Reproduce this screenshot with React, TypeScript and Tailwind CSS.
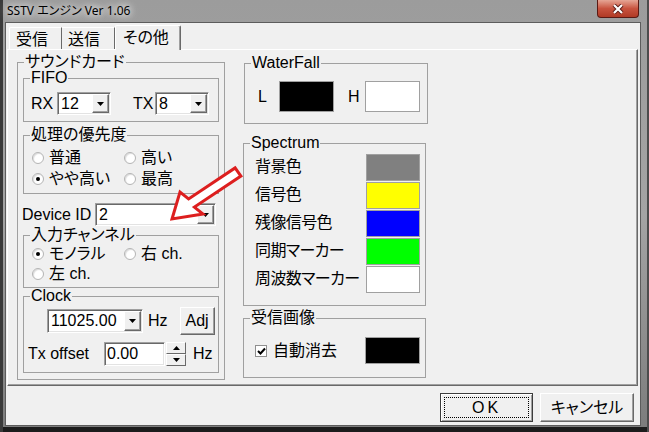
import type { ReactNode } from "react";

function Group({
  label,
  className,
  children,
}: {
  label: string;
  className: string;
  children?: ReactNode;
}) {
  return (
    <fieldset className={`border border-[#a0a0a0] ${className}`}>
      <legend className="ml-[6px] px-[1px] leading-[16px]">{label}</legend>
      {children}
    </fieldset>
  );
}

function Arrow({ up }: { up?: boolean }) {
  return (
    <svg width="7" height="4" viewBox="0 0 7 4">
      {up ? <path d="M0 4 L3.5 0 L7 4 Z" fill="#000" /> : <path d="M0 0 L7 0 L3.5 4 Z" fill="#000" />}
    </svg>
  );
}

function DropBtn() {
  return (
    <div className="w-[17px] h-full flex items-center justify-center bg-[#f0f0f0] border border-t-white border-l-white border-r-[#696969] border-b-[#696969] shadow-[inset_-1px_-1px_0_#a0a0a0]">
      <Arrow />
    </div>
  );
}

function Combo({ value, className }: { value: string; className: string }) {
  return (
    <div
      className={`flex bg-white border border-t-[#a0a0a0] border-l-[#a0a0a0] border-b-white border-r-white shadow-[inset_1px_1px_0_#696969,inset_-1px_-1px_0_#e3e3e3] p-[1px] ${className}`}
    >
      <div className="flex-1 pl-[2px] flex items-center leading-[18px]">{value}</div>
      <DropBtn />
    </div>
  );
}

function Radio({ label, checked, className }: { label: string; checked?: boolean; className?: string }) {
  return (
    <div className={`flex items-center ${className ?? ""}`}>
      <div className="w-[12px] h-[12px] rounded-full border border-[#b4b4b4] bg-white flex items-center justify-center shadow-[inset_1px_1px_1px_#dcdcdc]">
        {checked && <div className="w-[4px] h-[4px] rounded-full bg-black" />}
      </div>
      <span className="ml-[5px] leading-[18px]">{label}</span>
    </div>
  );
}

function Swatch({ color, className }: { color: string; className: string }) {
  return <div className={`border border-[#a0a0a0] ${color} ${className}`} />;
}

const spectrum = [
  { label: "背景色", color: "bg-[#808080]" },
  { label: "信号色", color: "bg-[#ffff00]" },
  { label: "残像信号色", color: "bg-[#0000ff]" },
  { label: "同期マーカー", color: "bg-[#00ff00]" },
  { label: "周波数マーカー", color: "bg-white" },
];

export default function App() {
  return (
    <div className="relative w-[649px] h-[432px] overflow-hidden flex flex-col bg-linear-to-b from-[#9c9c9c] via-[#a4a4a4] to-[#7c7c7c] shadow-[inset_3px_0_0_#3a3a3a,inset_-2px_0_0_#4c4c4c,inset_0_-5px_0_#1c1c1c] text-black text-[16px] font-['Liberation_Sans','Noto_Sans_CJK_JP',sans-serif] [font-feature-settings:'palt']">
      {/* title bar */}
      <div className="h-[22px] flex items-start justify-between">
        <div className="pl-[7px] pt-[4px] text-[12px] leading-[14px] font-['Noto_Sans','Noto_Sans_CJK_JP',sans-serif] [text-shadow:0_0_6px_#fff,0_0_10px_#fff]">
          SSTV エンジン Ver 1.06
        </div>
        <div className="mr-[10px] w-[42px] h-[18px] rounded-b-[4px] border border-t-0 border-[#5a1a14] bg-linear-to-b from-[#e5a595] via-[#c8533f] to-[#b03a25] flex items-center justify-center">
          <svg width="12" height="10" viewBox="0 0 12 10">
            <path d="M2 1 L10 9 M10 1 L2 9" stroke="#5a1a14" strokeWidth="4" />
            <path d="M2 1 L10 9 M10 1 L2 9" stroke="#fff" strokeWidth="2.2" />
          </svg>
        </div>
      </div>

      {/* client */}
      <div className="ml-[5px] w-[636px] h-[404px] border border-[#5c5c5c] bg-[#f0f0f0] flex flex-col">
        {/* tabs */}
        <div className="h-[26px] pl-[3px] flex items-end">
          <div className="w-[53px] h-[22px] pl-[6px] pt-[3px] leading-[18px] border-l border-t border-l-white border-t-white border-r border-r-[#696969] rounded-tl-[2px]">
            受信
          </div>
          <div className="w-[53px] h-[22px] pl-[6px] pt-[3px] leading-[18px] border-t border-t-white border-r border-r-[#696969]">
            送信
          </div>
          <div className="relative z-10 w-[66px] h-[25px] -mb-[1px] pl-[7px] pt-[3px] leading-[18px] bg-[#f0f0f0] border-l border-t border-l-white border-t-white border-r border-r-[#696969] shadow-[inset_-1px_0_0_#a0a0a0] rounded-t-[2px]">
            その他
          </div>
        </div>

        {/* panel */}
        <div className="ml-[1px] w-[631px] h-[337px] border border-t-white border-l-white border-r-[#696969] border-b-[#696969] shadow-[inset_-1px_-1px_0_#a0a0a0] flex items-start">
          {/* left column */}
          <Group label="サウンドカード" className="ml-[9px] mt-[4px] w-[208px] h-[326px] flex flex-col">
            <Group label="FIFO" className="ml-[5px] w-[196px] h-[52px]">
              <div className="mt-[6px] h-[23px] pl-[7px] flex items-center">
                <span className="w-[26px] leading-[18px]">RX</span>
                <Combo value="12" className="w-[54px] h-[23px]" />
                <span className="ml-[22px] w-[22px] leading-[18px]">TX</span>
                <Combo value="8" className="w-[54px] h-[23px]" />
              </div>
            </Group>
            <Group label="処理の優先度" className="ml-[5px] mt-[5px] w-[196px] h-[67px]">
              <div className="pt-[4px] pl-[8px] grid grid-cols-[92px_1fr]">
                <Radio label="普通" className="h-[21px]" />
                <Radio label="高い" className="h-[21px]" />
                <Radio label="やや高い" checked className="h-[21px]" />
                <Radio label="最高" className="h-[21px]" />
              </div>
            </Group>
            <div className="mt-[9px] h-[23px] pl-[4px] flex items-center">
              <span className="w-[73px] leading-[18px]">Device ID</span>
              <Combo value="2" className="w-[121px] h-[23px]" />
            </div>
            <Group label="入力チャンネル" className="ml-[5px] mt-[1px] w-[196px] h-[61px]">
              <div className="pt-[1px] pl-[8px] grid grid-cols-[92px_1fr]">
                <Radio label="モノラル" checked className="h-[20px]" />
                <Radio label="右 ch." className="h-[20px]" />
                <Radio label="左 ch." className="h-[20px]" />
              </div>
            </Group>
            <Group label="Clock" className="ml-[5px] w-[196px] h-[85px]">
              <div className="mt-[1px] h-[32px] pl-[23px] flex items-center">
                <Combo value="11025.00" className="w-[96px] h-[24px]" />
                <span className="ml-[5px] leading-[18px]">Hz</span>
                <div className="ml-[12px] w-[35px] h-[28px] flex items-center justify-center leading-[18px] bg-[#f0f0f0] border border-t-white border-l-white border-r-[#696969] border-b-[#696969] shadow-[inset_-1px_-1px_0_#a0a0a0]">
                  Adj
                </div>
              </div>
              <div className="mt-[5px] h-[24px] pl-[4px] flex items-center">
                <span className="w-[76px] leading-[18px]">Tx offset</span>
                <div className="w-[61px] h-[24px] pl-[2px] flex items-center leading-[18px] bg-white border border-t-[#a0a0a0] border-l-[#a0a0a0] border-b-white border-r-white shadow-[inset_1px_1px_0_#696969,inset_-1px_-1px_0_#e3e3e3]">
                  0.00
                </div>
                <div className="ml-[1px] w-[20px] h-[24px] flex flex-col">
                  <div className="h-[12px] flex items-center justify-center border border-t-white border-l-white border-r-[#696969] border-b-[#696969]">
                    <Arrow up />
                  </div>
                  <div className="h-[12px] flex items-center justify-center border border-t-white border-l-white border-r-[#696969] border-b-[#696969]">
                    <Arrow />
                  </div>
                </div>
                <span className="ml-[7px] leading-[18px]">Hz</span>
              </div>
            </Group>
          </Group>

          {/* right column */}
          <div className="ml-[18px] flex flex-col">
            <Group label="WaterFall" className="ml-[1px] mt-[5px] w-[184px] h-[69px]">
              <div className="mt-[10px] h-[31px] pl-[13px] flex items-center">
                <span className="w-[21px] leading-[18px]">L</span>
                <Swatch color="bg-black" className="w-[55px] h-[31px]" />
                <span className="ml-[14px] w-[17px] leading-[18px]">H</span>
                <Swatch color="bg-white" className="w-[55px] h-[31px]" />
              </div>
            </Group>
            <Group label="Spectrum" className="mt-[11px] w-[183px] h-[171px]">
              <div className="mt-[2px] pl-[11px] pr-[5px] flex flex-col">
                {spectrum.map((s) => (
                  <div key={s.label} className="h-[28px] flex items-center justify-between">
                    <span className="leading-[18px] tracking-[-0.6px]">{s.label}</span>
                    <Swatch color={s.color} className="w-[54px] h-[27px]" />
                  </div>
                ))}
              </div>
            </Group>
            <Group label="受信画像" className="mt-[4px] w-[183px] h-[68px]">
              <div className="mt-[11px] h-[27px] pl-[11px] pr-[5px] flex items-center">
                <div className="w-[12px] h-[12px] border border-[#8f8f8f] bg-white flex items-center justify-center">
                  <svg width="9" height="8" viewBox="0 0 9 8">
                    <path d="M1 4 L3.5 6.5 L8 1.5" stroke="#000" strokeWidth="2" fill="none" />
                  </svg>
                </div>
                <span className="ml-[6px] leading-[18px]">自動消去</span>
                <Swatch color="bg-black" className="ml-auto w-[55px] h-[27px]" />
              </div>
            </Group>
          </div>
        </div>

        {/* buttons */}
        <div className="flex-1 pt-[7px] pr-[6px] flex justify-end items-start gap-[7px]">
          <div className="w-[93px] h-[29px] p-[3px] bg-[#f0f0f0] border border-[#3c3c3c] shadow-[inset_1px_1px_0_#fff,inset_-1px_-1px_0_#a0a0a0]">
            <div className="w-full h-full flex items-center justify-center border border-dotted border-black tracking-[3px] leading-[18px]">
              OK
            </div>
          </div>
          <div className="w-[94px] h-[29px] flex items-center justify-center leading-[18px] bg-[#f0f0f0] border border-t-white border-l-white border-r-[#696969] border-b-[#696969] shadow-[inset_-1px_-1px_0_#a0a0a0]">
            キャンセル
          </div>
        </div>
      </div>

      {/* red annotation arrow */}
      <svg className="absolute left-[165px] top-[160px] pointer-events-none" width="85" height="65" viewBox="0 0 85 65">
        <polygon
          points="7,59 15,32 23.6,38.9 70.1,7.9 75.9,16.1 29.4,47.1 38,54"
          fill="#fff"
          stroke="#dd1f1f"
          strokeWidth="3"
          strokeLinejoin="miter"
        />
      </svg>
    </div>
  );
}
